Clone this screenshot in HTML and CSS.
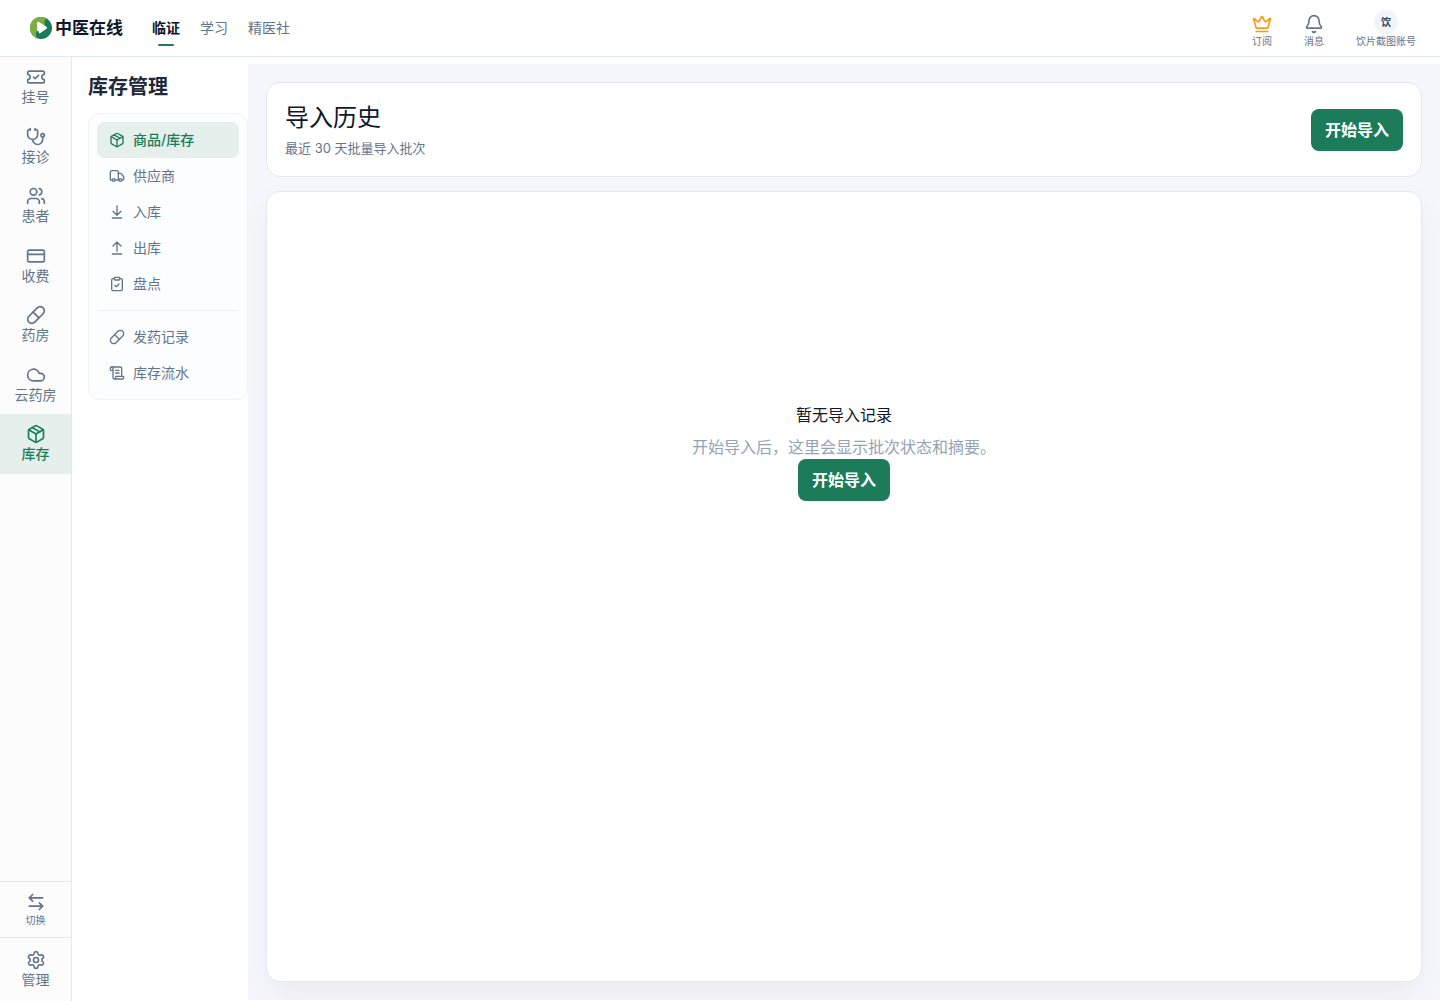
FILE: index.html
```html
<!DOCTYPE html>
<html lang="zh-CN">
<head>
    <meta charset="UTF-8">
    <meta name="viewport" content="width=device-width, initial-scale=1.0">
    <title>导入历史 - 中医在线</title>
    <link rel="stylesheet" href="styles.css">
</head>
<body>
    <!-- Shared icons -->
    <svg class="sprite" aria-hidden="true">
        <symbol id="i-ticket" viewBox="0 0 24 24"><path d="M2 9a3 3 0 1 1 0 6v2a2 2 0 0 0 2 2h16a2 2 0 0 0 2-2v-2a3 3 0 1 1 0-6V7a2 2 0 0 0-2-2H4a2 2 0 0 0-2 2Z"/><path d="m9 12 2 2 4-4"/></symbol>
        <symbol id="i-stethoscope" viewBox="0 0 24 24"><path d="M11 2v2M5 2v2"/><path d="M5 3H4a2 2 0 0 0-2 2v4a6 6 0 0 0 12 0V5a2 2 0 0 0-2-2h-1"/><path d="M8 15a6 6 0 0 0 12 0v-3"/><circle cx="20" cy="10" r="2"/></symbol>
        <symbol id="i-users" viewBox="0 0 24 24"><path d="M16 21v-2a4 4 0 0 0-4-4H6a4 4 0 0 0-4 4v2"/><path d="M16 3.128a4 4 0 0 1 0 7.744"/><path d="M22 21v-2a4 4 0 0 0-3-3.87"/><circle cx="9" cy="7" r="4"/></symbol>
        <symbol id="i-card" viewBox="0 0 24 24"><rect width="20" height="14" x="2" y="5" rx="2"/><path d="M2 10h20"/></symbol>
        <symbol id="i-pill" viewBox="0 0 24 24"><path d="m10.5 20.5 10-10a4.95 4.95 0 1 0-7-7l-10 10a4.95 4.95 0 1 0 7 7Z"/><path d="m8.5 8.5 7 7"/></symbol>
        <symbol id="i-cloud" viewBox="0 0 24 24"><path d="M17.5 19H9a7 7 0 1 1 6.71-9h1.79a4.5 4.5 0 1 1 0 9Z"/></symbol>
        <symbol id="i-package" viewBox="0 0 24 24"><path d="M11 21.73a2 2 0 0 0 2 0l7-4A2 2 0 0 0 21 16V8a2 2 0 0 0-1-1.73l-7-4a2 2 0 0 0-2 0l-7 4A2 2 0 0 0 3 8v8a2 2 0 0 0 1 1.73z"/><path d="M12 22V12"/><path d="M3.29 7 12 12l8.71-5"/><path d="m7.5 4.27 9 5.15"/></symbol>
        <symbol id="i-switch" viewBox="0 0 24 24"><path d="M8 3 4 7l4 4M4 7h16M16 21l4-4-4-4M20 17H4"/></symbol>
        <symbol id="i-settings" viewBox="0 0 24 24"><path d="M9.671 4.136a2.34 2.34 0 0 1 4.659 0 2.34 2.34 0 0 0 3.319 1.915 2.34 2.34 0 0 1 2.33 4.033 2.34 2.34 0 0 0 0 3.831 2.34 2.34 0 0 1-2.33 4.033 2.34 2.34 0 0 0-3.319 1.915 2.34 2.34 0 0 1-4.659 0 2.34 2.34 0 0 0-3.32-1.915 2.34 2.34 0 0 1-2.33-4.033 2.34 2.34 0 0 0 0-3.831A2.34 2.34 0 0 1 6.35 6.051a2.34 2.34 0 0 0 3.319-1.915"/><circle cx="12" cy="12" r="3"/></symbol>
        <symbol id="i-truck" viewBox="0 0 24 24"><path d="M14 18V6a2 2 0 0 0-2-2H4a2 2 0 0 0-2 2v11a1 1 0 0 0 1 1h2M15 18H9"/><path d="M19 18h2a1 1 0 0 0 1-1v-3.65a1 1 0 0 0-.22-.624l-3.48-4.35A1 1 0 0 0 17.52 8H14"/><circle cx="17" cy="18" r="2"/><circle cx="7" cy="18" r="2"/></symbol>
        <symbol id="i-in" viewBox="0 0 24 24"><path d="M12 17V3M6 11l6 6 6-6M19 21H5"/></symbol>
        <symbol id="i-out" viewBox="0 0 24 24"><path d="m18 9-6-6-6 6M12 3v14M5 21h14"/></symbol>
        <symbol id="i-clipboard" viewBox="0 0 24 24"><rect width="8" height="4" x="8" y="2" rx="1"/><path d="M16 4h2a2 2 0 0 1 2 2v14a2 2 0 0 1-2 2H6a2 2 0 0 1-2-2V6a2 2 0 0 1 2-2h2"/><path d="m9 14 2 2 4-4"/></symbol>
        <symbol id="i-scroll" viewBox="0 0 24 24"><path d="M15 12h-5M15 8h-5M19 17V5a2 2 0 0 0-2-2H4"/><path d="M8 21h12a2 2 0 0 0 2-2v-1a1 1 0 0 0-1-1H11a1 1 0 0 0-1 1v1a2 2 0 1 1-4 0V5a2 2 0 1 0-4 0v2a1 1 0 0 0 1 1h3"/></symbol>
        <symbol id="i-crown" viewBox="0 0 24 24"><path d="M11.562 3.266a.5.5 0 0 1 .876 0L15.39 8.87a1 1 0 0 0 1.516.294L21.183 5.5a.5.5 0 0 1 .798.519l-2.834 10.246a1 1 0 0 1-.956.734H5.81a1 1 0 0 1-.957-.734L2.02 6.02a.5.5 0 0 1 .798-.519l4.276 3.664a1 1 0 0 0 1.516-.294z"/><path d="M5 21h14"/></symbol>
        <symbol id="i-bell" viewBox="0 0 24 24"><path d="M10.268 21a2 2 0 0 0 3.464 0"/><path d="M3.262 15.326A1 1 0 0 0 4 17h16a1 1 0 0 0 .74-1.673C19.41 13.956 18 12.499 18 8A6 6 0 0 0 6 8c0 4.499-1.411 5.956-2.738 7.326"/></symbol>
    </svg>

    <header class="topbar">
        <a class="brand" href="#">
            <svg class="brand-logo" viewBox="0 0 22 22" aria-hidden="true">
                <circle cx="11" cy="11" r="11" fill="#1b7a58"/>
                <path d="M16 1.200A11 11 0 1 0 7.500 21.400C5 18.500 5.500 15 8 13L15 8C14 5.500 14.500 3 16 1.200Z" fill="#7cae42"/>
                <path d="M7 6c0-1 1-1.600 1.900-1.100l7.600 4.900c.8.500.8 1.500 0 2l-6.500 4.500c-.4.300-.8.100-.9-.3C8.800 14.500 8.200 14 7.600 13.800 7.200 13.600 7 13.300 7 13z" fill="#fff"/>
            </svg>
            <span>中医在线</span>
        </a>
        <nav class="main-nav">
            <a class="active" href="#">临证</a>
            <a href="#">学习</a>
            <a href="#">精医社</a>
        </nav>
        <div class="top-actions">
            <button class="top-btn subscribe" type="button"><svg class="icon"><use href="#i-crown"/></svg><span>订阅</span></button>
            <button class="top-btn" type="button"><svg class="icon"><use href="#i-bell"/></svg><span>消息</span></button>
            <button class="top-btn" type="button"><span class="avatar">饮</span><span>饮片截图账号</span></button>
        </div>
    </header>

    <div class="shell">
        <aside class="rail">
            <nav class="rail-nav">
                <a class="rail-item" href="#"><svg class="icon"><use href="#i-ticket"/></svg>挂号</a>
                <a class="rail-item" href="#"><svg class="icon"><use href="#i-stethoscope"/></svg>接诊</a>
                <a class="rail-item" href="#"><svg class="icon"><use href="#i-users"/></svg>患者</a>
                <a class="rail-item" href="#"><svg class="icon"><use href="#i-card"/></svg>收费</a>
                <a class="rail-item" href="#"><svg class="icon"><use href="#i-pill"/></svg>药房</a>
                <a class="rail-item" href="#"><svg class="icon"><use href="#i-cloud"/></svg>云药房</a>
                <a class="rail-item active" href="#"><svg class="icon"><use href="#i-package"/></svg>库存</a>
            </nav>
            <button class="rail-switch" type="button"><svg class="icon"><use href="#i-switch"/></svg>切换</button>
            <a class="rail-item rail-manage" href="#"><svg class="icon"><use href="#i-settings"/></svg>管理</a>
        </aside>

        <aside class="side">
            <h2>库存管理</h2>
            <nav class="side-nav">
                <a class="active" href="#"><svg class="icon"><use href="#i-package"/></svg>商品/库存</a>
                <a href="#"><svg class="icon"><use href="#i-truck"/></svg>供应商</a>
                <a href="#"><svg class="icon"><use href="#i-in"/></svg>入库</a>
                <a href="#"><svg class="icon"><use href="#i-out"/></svg>出库</a>
                <a href="#"><svg class="icon"><use href="#i-clipboard"/></svg>盘点</a>
                <hr>
                <a href="#"><svg class="icon"><use href="#i-pill"/></svg>发药记录</a>
                <a href="#"><svg class="icon"><use href="#i-scroll"/></svg>库存流水</a>
            </nav>
        </aside>

        <main class="content">
            <section class="card page-head">
                <div>
                    <h1>导入历史</h1>
                    <p>最近 30 天批量导入批次</p>
                </div>
                <button class="btn-primary" type="button">开始导入</button>
            </section>
            <section class="card history">
                <div class="empty">
                    <h3>暂无导入记录</h3>
                    <p>开始导入后，这里会显示批次状态和摘要。</p>
                    <button class="btn-primary" type="button">开始导入</button>
                </div>
            </section>
        </main>
    </div>
</body>
</html>
```
FILE: styles.css
```css
* {
    margin: 0;
    padding: 0;
    box-sizing: border-box;
}

body {
    display: flex;
    flex-direction: column;
    min-height: 100vh;
    font-family: Inter, "Noto Sans CJK SC", sans-serif;
    font-size: 14px;
    line-height: 20px;
    color: #0f172a;
    background: #fff;
}

a {
    color: inherit;
    text-decoration: none;
}

button {
    font: inherit;
    color: inherit;
    background: none;
    border: none;
    cursor: pointer;
}

.sprite {
    position: absolute;
    width: 0;
    height: 0;
}

.icon {
    width: 20px;
    height: 20px;
    flex-shrink: 0;
    fill: none;
    stroke: currentColor;
    stroke-width: 2;
    stroke-linecap: round;
    stroke-linejoin: round;
}

/* Top bar */
.topbar {
    display: flex;
    align-items: center;
    height: 57px;
    padding: 0 24px 0 30px;
    border-bottom: 1px solid #e2e8f0;
}

.brand {
    display: flex;
    align-items: center;
    gap: 3px;
    font-size: 17px;
    font-weight: 700;
}

.brand-logo {
    width: 22px;
    height: 22px;
}

.main-nav {
    display: flex;
    gap: 20px;
    margin-left: 29px;
    color: #64748b;
}

.main-nav a {
    position: relative;
}

.main-nav .active {
    color: #0f172a;
    font-weight: 700;
}

.main-nav .active::after {
    content: "";
    position: absolute;
    left: 6px;
    right: 6px;
    bottom: -8px;
    height: 2px;
    border-radius: 1px;
    background: #1c7c5a;
}

.top-actions {
    display: flex;
    align-items: flex-end;
    gap: 32px;
    margin-left: auto;
    padding-top: 2px;
    color: #64748b;
}

.top-btn {
    display: flex;
    flex-direction: column;
    align-items: center;
    font-size: 10px;
    line-height: 14px;
}

.subscribe .icon {
    color: #f99d0c;
}

.avatar {
    width: 24px;
    height: 24px;
    border-radius: 50%;
    background: #f1f5f9;
    color: #334155;
    font-weight: 700;
    line-height: 24px;
}

/* Layout below the top bar */
.shell {
    flex: 1;
    display: flex;
}

.rail {
    display: flex;
    flex-direction: column;
    width: 72px;
    flex-shrink: 0;
    background: #fcfcfd;
    border-right: 1px solid #e2e8f0;
    color: #64748b;
}

.rail-nav {
    display: grid;
    grid-template-rows: repeat(7, 1fr);
    height: 417px;
    margin-bottom: auto;
}

.rail-item {
    display: flex;
    flex-direction: column;
    align-items: center;
    padding-top: 10px;
}

.rail-item.active {
    background: #e5efec;
    color: #1c7c5a;
    font-weight: 500;
}

.rail-switch {
    display: flex;
    flex-direction: column;
    align-items: center;
    height: 56px;
    padding-top: 10px;
    border-top: 1px solid #e2e8f0;
    font-size: 10px;
    line-height: 16px;
}

.rail-manage {
    height: 64px;
    padding-top: 12px;
    border-top: 1px solid #e2e8f0;
}

/* Inventory menu */
.side {
    width: 176px;
    flex-shrink: 0;
    padding: 16px 0 0 16px;
}

.side h2 {
    margin-bottom: 12px;
    font-size: 20px;
    line-height: 28px;
    font-weight: 700;
    color: #1e293b;
}

.side-nav {
    padding: 8px;
    border: 1px solid #eef1f6;
    border-radius: 12px;
    background: #fcfdff;
    color: #64748b;
}

.side-nav a {
    display: flex;
    align-items: center;
    gap: 8px;
    height: 36px;
    padding: 0 12px;
    border-radius: 8px;
}

.side-nav .active {
    background: #e5efec;
    color: #1c7c5a;
    font-weight: 500;
}

.side-nav .icon {
    width: 16px;
    height: 16px;
}

.side-nav hr {
    margin: 8px 0;
    border: none;
    border-top: 1px solid #eceff4;
}

/* Content */
.content {
    flex: 1;
    display: flex;
    flex-direction: column;
    gap: 14px;
    margin: 7px 0 1px;
    padding: 18px;
    background: #f6f7fc;
    overflow: hidden;
}

.card {
    background: #fff;
    border: 1px solid #e5e7ee;
    border-radius: 14px;
}

.page-head {
    display: flex;
    align-items: center;
    justify-content: space-between;
    padding: 18px;
}

.page-head h1 {
    margin-bottom: 3px;
    font-size: 24px;
    line-height: 34px;
    font-weight: 400;
}

.page-head p {
    font-size: 13px;
    color: #64748b;
}

.btn-primary {
    height: 42px;
    padding: 0 14px;
    border-radius: 8px;
    background: #1c7c5a;
    color: #fff;
    font-size: 16px;
    font-weight: 700;
}

.history {
    flex: 1;
    box-shadow: 0 12px 32px rgba(15, 23, 42, 0.05);
}

.empty {
    display: flex;
    flex-direction: column;
    align-items: center;
    justify-content: center;
    min-height: 520px;
    font-size: 16px;
    line-height: 24px;
}

.empty h3 {
    margin-bottom: 8px;
    font-size: 16px;
    font-weight: 400;
}

.empty p {
    color: #94a3b8;
}
```
